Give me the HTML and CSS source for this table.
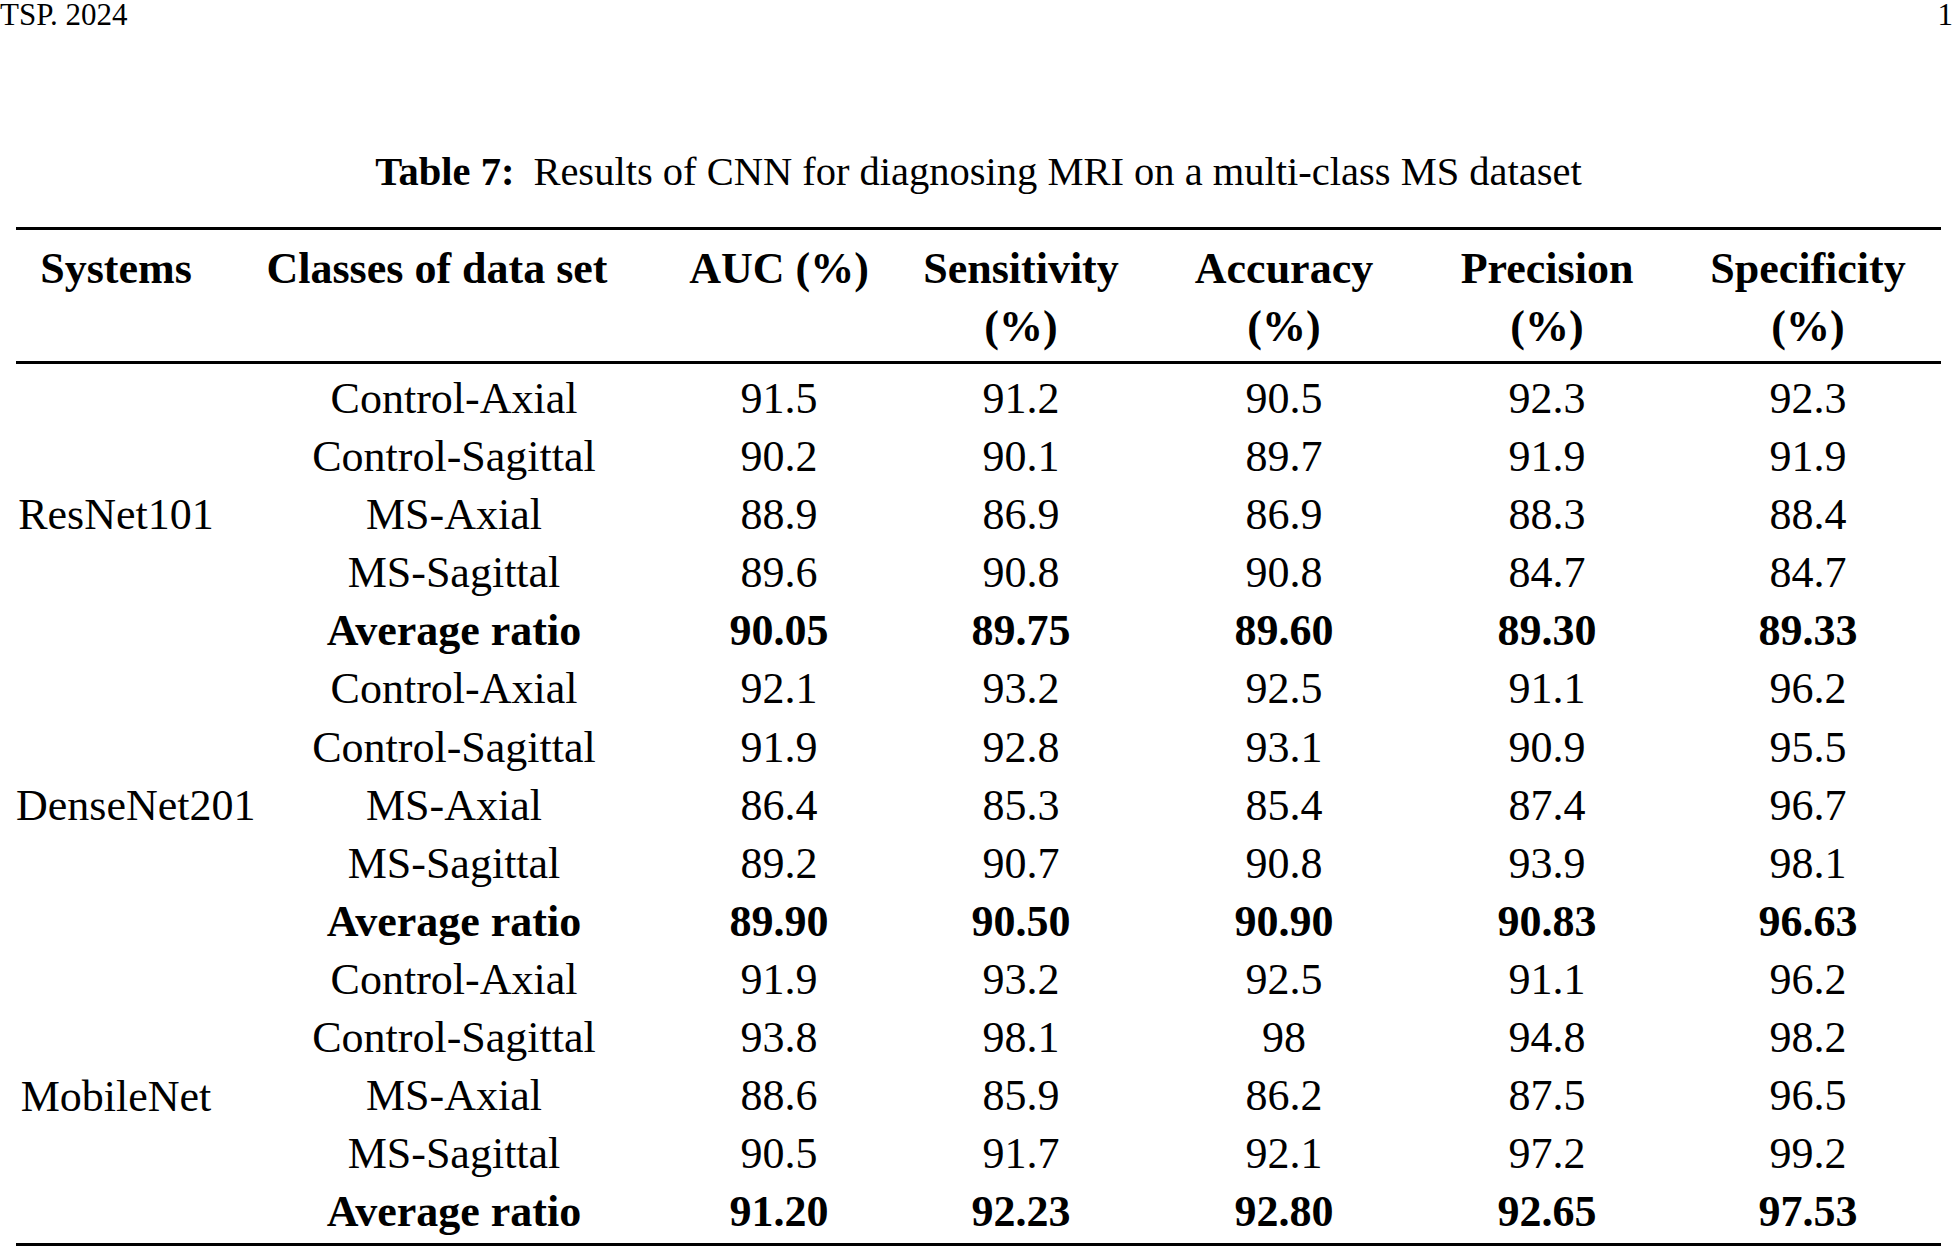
FILE: index.html
```html
<!DOCTYPE html>
<html lang="en">
<head>
<meta charset="utf-8">
<title>TSP. 2024 — Table 7</title>
<link rel="stylesheet" href="styles.css">
</head>
<body>
<header class="running-head">
  <span class="journal">TSP. 2024</span>
  <span class="page-no">1</span>
</header>
<main class="content">
  <p class="caption"><b>Table 7:</b><span class="cap-gap"></span>Results of CNN for diagnosing MRI on a multi-class MS dataset</p>
  <table class="results">
    <colgroup>
      <col class="c-sys">
      <col class="c-cls">
      <col class="c-auc">
      <col class="c-sen">
      <col class="c-acc">
      <col class="c-pre">
      <col class="c-spe">
    </colgroup>
    <thead>
      <tr>
        <th class="sys">Systems</th>
        <th>Classes of data set</th>
        <th>AUC (%)</th>
        <th>Sensitivity<br>(%)</th>
        <th>Accuracy<br>(%)</th>
        <th>Precision<br>(%)</th>
        <th class="last">Specificity<br>(%)</th>
      </tr>
    </thead>
    <tbody>
      <tr class="first">
        <td class="sys" rowspan="5">ResNet101</td>
        <td class="cls">Control-Axial</td><td>91.5</td><td>91.2</td><td>90.5</td><td>92.3</td><td class="last">92.3</td>
      </tr>
      <tr><td class="cls">Control-Sagittal</td><td>90.2</td><td>90.1</td><td>89.7</td><td>91.9</td><td class="last">91.9</td></tr>
      <tr><td class="cls">MS-Axial</td><td>88.9</td><td>86.9</td><td>86.9</td><td>88.3</td><td class="last">88.4</td></tr>
      <tr><td class="cls">MS-Sagittal</td><td>89.6</td><td>90.8</td><td>90.8</td><td>84.7</td><td class="last">84.7</td></tr>
      <tr class="avg"><td class="cls">Average ratio</td><td>90.05</td><td>89.75</td><td>89.60</td><td>89.30</td><td class="last">89.33</td></tr>

      <tr>
        <td class="sys" rowspan="5">DenseNet201</td>
        <td class="cls">Control-Axial</td><td>92.1</td><td>93.2</td><td>92.5</td><td>91.1</td><td class="last">96.2</td>
      </tr>
      <tr><td class="cls">Control-Sagittal</td><td>91.9</td><td>92.8</td><td>93.1</td><td>90.9</td><td class="last">95.5</td></tr>
      <tr><td class="cls">MS-Axial</td><td>86.4</td><td>85.3</td><td>85.4</td><td>87.4</td><td class="last">96.7</td></tr>
      <tr><td class="cls">MS-Sagittal</td><td>89.2</td><td>90.7</td><td>90.8</td><td>93.9</td><td class="last">98.1</td></tr>
      <tr class="avg"><td class="cls">Average ratio</td><td>89.90</td><td>90.50</td><td>90.90</td><td>90.83</td><td class="last">96.63</td></tr>

      <tr>
        <td class="sys" rowspan="5">MobileNet</td>
        <td class="cls">Control-Axial</td><td>91.9</td><td>93.2</td><td>92.5</td><td>91.1</td><td class="last">96.2</td>
      </tr>
      <tr><td class="cls">Control-Sagittal</td><td>93.8</td><td>98.1</td><td>98</td><td>94.8</td><td class="last">98.2</td></tr>
      <tr><td class="cls">MS-Axial</td><td>88.6</td><td>85.9</td><td>86.2</td><td>87.5</td><td class="last">96.5</td></tr>
      <tr><td class="cls">MS-Sagittal</td><td>90.5</td><td>91.7</td><td>92.1</td><td>97.2</td><td class="last">99.2</td></tr>
      <tr class="avg final"><td class="cls">Average ratio</td><td>91.20</td><td>92.23</td><td>92.80</td><td>92.65</td><td class="last">97.53</td></tr>
    </tbody>
  </table>
</main>
</body>
</html>
```

FILE: styles.css
```css
html, body {
  margin: 0;
  padding: 0;
  background: #ffffff;
  color: #000000;
  font-family: "Liberation Serif", "Times New Roman", serif;
}

.running-head {
  display: flex;
  justify-content: space-between;
  font-size: 31px;
  line-height: 30px;
  height: 30px;
  padding-right: 2px;
}

.content {
  padding: 0 14px 0 16px;
}

.caption {
  margin: 118px 0 0 0;
  text-align: center;
  font-size: 40.5px;
  line-height: 48px;
}

.caption b {
  font-weight: bold;
}

.cap-gap {
  display: inline-block;
  width: 19px;
}

.results {
  margin-top: 31px;
  width: 1925px;
  table-layout: fixed;
  border-collapse: collapse;
  font-size: 44px;
}

.c-sys { width: 200px; }
.c-cls { width: 442px; }
.c-auc { width: 242px; }
.c-sen { width: 242px; }
.c-acc { width: 284px; }
.c-pre { width: 242px; }
.c-spe { width: 273px; }

.results thead tr {
  border-top: 3px solid #000;
  border-bottom: 3px solid #000;
}

.results th {
  font-weight: bold;
  line-height: 58px;
  padding: 10px 0 5px 0;
  vertical-align: top;
  text-align: center;
  white-space: nowrap;
}

.results td {
  padding: 0;
  line-height: 58.1px;
  text-align: center;
  white-space: nowrap;
}

.results .first td {
  padding-top: 6px;
}

.results td.sys {
  vertical-align: middle;
  text-align: center;
}

.results td.cls {
  padding-left: 34px;
}

.results .last {
  padding-left: 7px;
}

.results .avg td {
  font-weight: bold;
}

.results .final td {
  padding-bottom: 2px;
}

.results tbody {
  border-bottom: 3px solid #000;
}
```
